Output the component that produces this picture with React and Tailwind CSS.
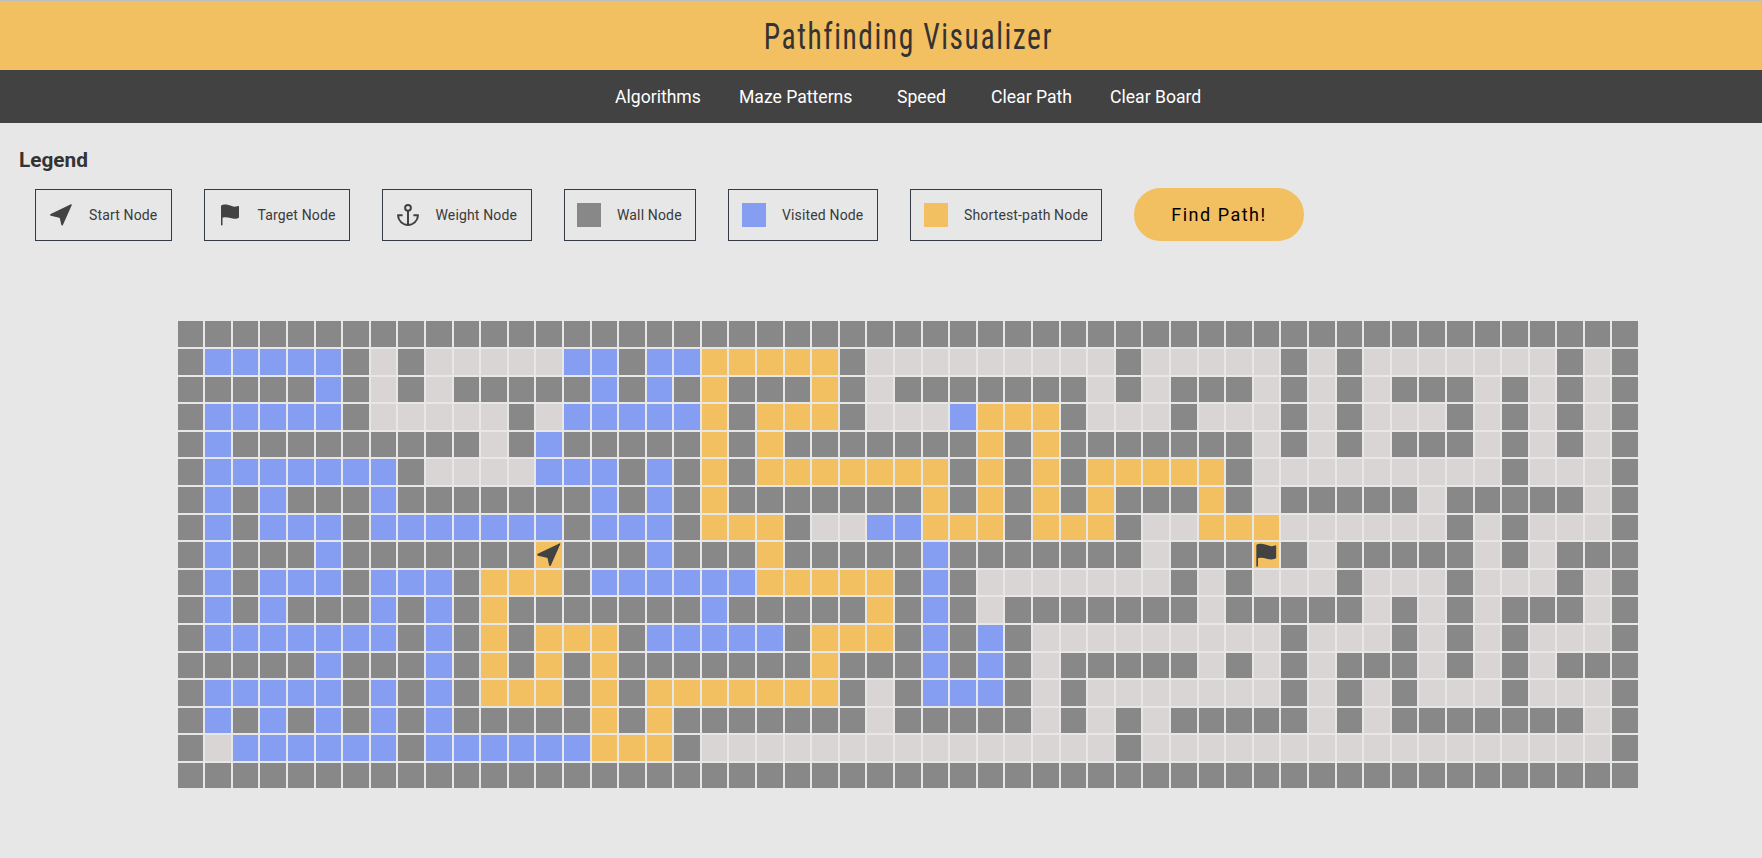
import { IoFlag } from "react-icons/io5";

/* One string per row: # wall, v visited, p shortest path, S start, T target, . empty */
const BOARD = [
  "#####################################################",
  "#vvvvv#.#....." + "vv#vvppppp#.." + ".......#....." + "#.#.......#.#",
  "#####v#.#.####" + "#v#v#p###p#.#" + "######.#.###." + "#.#.###.#.#.#",
  "#vvvvv#.....#." + "vvvvvp#ppp#.." + ".vppp#...#..." + "#.#...#.#.#.#",
  "#v#########.#v" + "#####p#p#####" + "##p#p#######." + "#.#.###.#.#.#",
  "#vvvvvvv#....v" + "vv#v#p#pppppp" + "p#p#p#ppppp#." + "........#...#",
  "#v#v###v######" + "#v#v#p#######" + "p#p#p#p###p#." + "#####.#####.#",
  "#v#vvv#vvvvvvv" + "#vvv#ppp#..vv" + "ppp#ppp#..ppp" + "......#.#...#",
  "#v###v#######S" + "###v###p#####" + "v#######.###T" + "#.#####.#.###",
  "#v#vvv#vvv#ppp" + "#vvvvvvppppp#" + "v#.......#.#." + "..#...#...#.#",
  "#v#v###v#v#p##" + "#####v#####p#" + "v#.#######.##" + "###.#.#.###.#",
  "#vvvvvvv#v#p#p" + "pp#vvvvv#ppp#" + "v#v#........." + "#...#.#.#...#",
  "#####v###v#p#p" + "#p#######p###" + "v#v#.#####.#." + "#.###.#.#.###",
  "#vvvvv#v#v#ppp" + "#p#ppppppp#.#" + "vvv#.#......." + "#.#.#...#...#",
  "#v#v#v#v#v####" + "#p#p#######.#" + "####.#.#.####" + "#.#.#######.#",
  "#.vvvvvv#vvvvv" + "vppp#........" + ".......#....." + "............#",
  "#####################################################",
];

const CELL_COLORS = {
  "#": "bg-[#888888]",
  v: "bg-[#869ef1]",
  p: "bg-[#f2bf61]",
  S: "bg-[#f2bf61]",
  T: "bg-[#f2bf61]",
  ".": "bg-[#d9d5d4]",
};

function ArrowIcon({ className }) {
  return (
    <svg viewBox="0 0 24 24" className={className} fill="currentColor">
      <path d="M21.9 1.300c.6-.2 1.100.2.8.9L13.900 22c-.3.800-1.500.7-1.600-.2l-1.400-6.300a1 1 0 0 0-.8-.8l-8.200-1.900c-.900-.2-1-1.400-.2-1.700z" />
    </svg>
  );
}

function AnchorIcon({ className }) {
  return (
    <svg viewBox="0 0 24 24" className={className} fill="none" stroke="currentColor" strokeWidth="2" strokeLinejoin="round">
      <circle cx="12" cy="4.800" r="2.900" />
      <path d="M12 7.600v14.200M6.600 12.200H2c.2 5.500 4.500 9.800 10 9.800s9.800-4.300 10-9.800h-4.600" />
    </svg>
  );
}

function Cell({ kind }) {
  return (
    <div className={`flex h-[25.6px] w-[25.6px] shrink-0 items-center justify-center text-[#424242] ${CELL_COLORS[kind]}`}>
      {kind === "S" && <ArrowIcon className="size-[25.6px] shrink-0" />}
      {kind === "T" && <IoFlag className="size-[26.5px] shrink-0" />}
    </div>
  );
}

function LegendItem({ className, children, label }) {
  return (
    <li className={`flex h-[52px] items-center border border-[#343a46] text-sm text-[#3a3a3a] ${className}`}>
      {children}
      <span className="ml-4 tracking-[0.15px] whitespace-nowrap">{label}</span>
    </li>
  );
}

export default function App() {
  return (
    <div className="h-[858px] overflow-hidden bg-[#e7e7e7] font-[Roboto,sans-serif]">
      <div className="w-[1816px]">
        <header className="flex h-[70px] items-center justify-center border-t border-[#b9c0c0] bg-[#f2bf61] pt-[2px]">
          <h1 className="origin-center scale-x-[0.82] pl-px text-[36px] leading-none font-normal tracking-[1.9px] text-[#333333] font-stretch-condensed">
            Pathfinding Visualizer
          </h1>
        </header>

        <nav className="flex h-[53px] items-center bg-[#424242] pt-[2px] pl-[615px] text-[17.6px] text-white">
          <a className="w-[124px]">Algorithms</a>
          <a className="w-[158px]">Maze Patterns</a>
          <a className="w-[94px]">Speed</a>
          <a className="w-[119px]">Clear Path</a>
          <a>Clear Board</a>
        </nav>

        <section className="pt-6 pl-[19px]">
          <h2 className="text-[20.8px] leading-[26px] font-bold text-[#333333]">Legend</h2>
          <div className="mt-[15px] ml-4 flex items-center gap-8">
            <ul className="flex gap-8">
              <LegendItem className="w-[137px] pl-[13px]" label="Start Node">
                <ArrowIcon className="size-6 text-[#424242]" />
              </LegendItem>
              <LegendItem className="w-[146px] pl-[12.5px]" label="Target Node">
                <IoFlag className="size-6 text-[#424242]" />
              </LegendItem>
              <LegendItem className="w-[150px] pl-[12.5px]" label="Weight Node">
                <AnchorIcon className="size-6 text-[#424242]" />
              </LegendItem>
              <LegendItem className="w-[132px] pl-3" label="Wall Node">
                <span className="size-6 bg-[#888888]" />
              </LegendItem>
              <LegendItem className="w-[150px] pl-[13px]" label="Visited Node">
                <span className="size-6 bg-[#869ef1]" />
              </LegendItem>
              <LegendItem className="w-[192px] pl-[13px]" label="Shortest-path Node">
                <span className="size-6 bg-[#f2bf61]" />
              </LegendItem>
            </ul>
            <button className="h-[53px] w-[170px] rounded-full bg-[#f2bf61] text-lg tracking-[1.5px] text-black">
              Find Path!
            </button>
          </div>
        </section>

        <main className="mt-[80.4px] flex flex-col gap-[2px] pl-[177.6px]">
          {BOARD.map((row, y) => (
            <div key={y} className="flex gap-[2px]">
              {[...row].map((kind, x) => (
                <Cell key={x} kind={kind} />
              ))}
            </div>
          ))}
        </main>
      </div>
    </div>
  );
}
